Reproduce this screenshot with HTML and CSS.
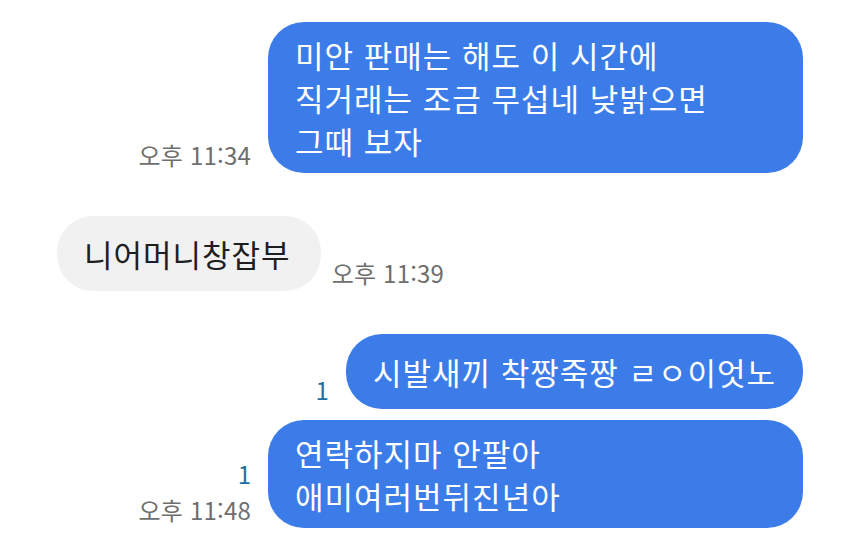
FILE: index.html
```html
<!DOCTYPE html>
<html lang="ko">
<head>
<meta charset="utf-8">
<link rel="stylesheet" href="styles.css">
</head>
<body>
<div class="chat">
  <div class="row sent gap-big">
    <div class="meta">
      <span class="time">오후 11:34</span>
    </div>
    <div class="bubble blue wide">미안 판매는 해도 이 시간에<br>직거래는 조금 무섭네 낮밝으면<br>그때 보자</div>
  </div>

  <div class="row received gap-big">
    <div class="bubble gray single">니어머니창잡부</div>
    <div class="meta">
      <span class="time">오후 11:39</span>
    </div>
  </div>

  <div class="row sent gap-small">
    <div class="meta">
      <span class="unread">1</span>
    </div>
    <div class="bubble blue single">시발새끼 착짱죽짱 ㄹㅇ이엇노</div>
  </div>

  <div class="row sent">
    <div class="meta">
      <span class="unread">1</span>
      <span class="time">오후 11:48</span>
    </div>
    <div class="bubble blue wide">연락하지마 안팔아<br>애미여러번뒤진년아</div>
  </div>
</div>
</body>
</html>
```

FILE: styles.css
```css
* {
  box-sizing: border-box;
}

html, body {
  margin: 0;
  padding: 0;
  background: #ffffff;
}

body {
  width: 850px;
  height: 560px;
  overflow: hidden;
  font-family: "Noto Sans CJK KR", "Noto Sans", sans-serif;
}

.chat {
  display: flex;
  flex-direction: column;
  padding: 22px 47px 0 57px;
}

.row {
  display: flex;
  align-items: flex-end;
}

.row.sent {
  justify-content: flex-end;
  gap: 17px;
}

.row.received {
  justify-content: flex-start;
  gap: 11px;
}

.gap-big {
  margin-bottom: 43px;
}

.gap-small {
  margin-bottom: 11px;
}

.bubble {
  font-size: 31px;
  line-height: 43px;
  letter-spacing: 1px;
  padding: 11px 27px;
  border-radius: 36px;
  white-space: nowrap;
}

.bubble.single {
  padding-top: 16px;
  padding-bottom: 16px;
}

.bubble.wide {
  width: 535px;
}

.bubble.blue {
  background: #3b7ce8;
  color: #ffffff;
}

.bubble.gray {
  background: #f1f1f1;
  color: #1e1e1e;
  padding-right: 30px;
}

.meta {
  display: flex;
  flex-direction: column;
  align-items: flex-end;
  padding-bottom: 3px;
}

.time {
  font-size: 24px;
  line-height: 1.2;
  letter-spacing: 0.2px;
  color: #6e6e6e;
}

.unread {
  font-size: 24px;
  line-height: 24px;
  color: #23709e;
  margin-bottom: 4px;
}

.unread + .time {
  margin-top: 6px;
}
```
